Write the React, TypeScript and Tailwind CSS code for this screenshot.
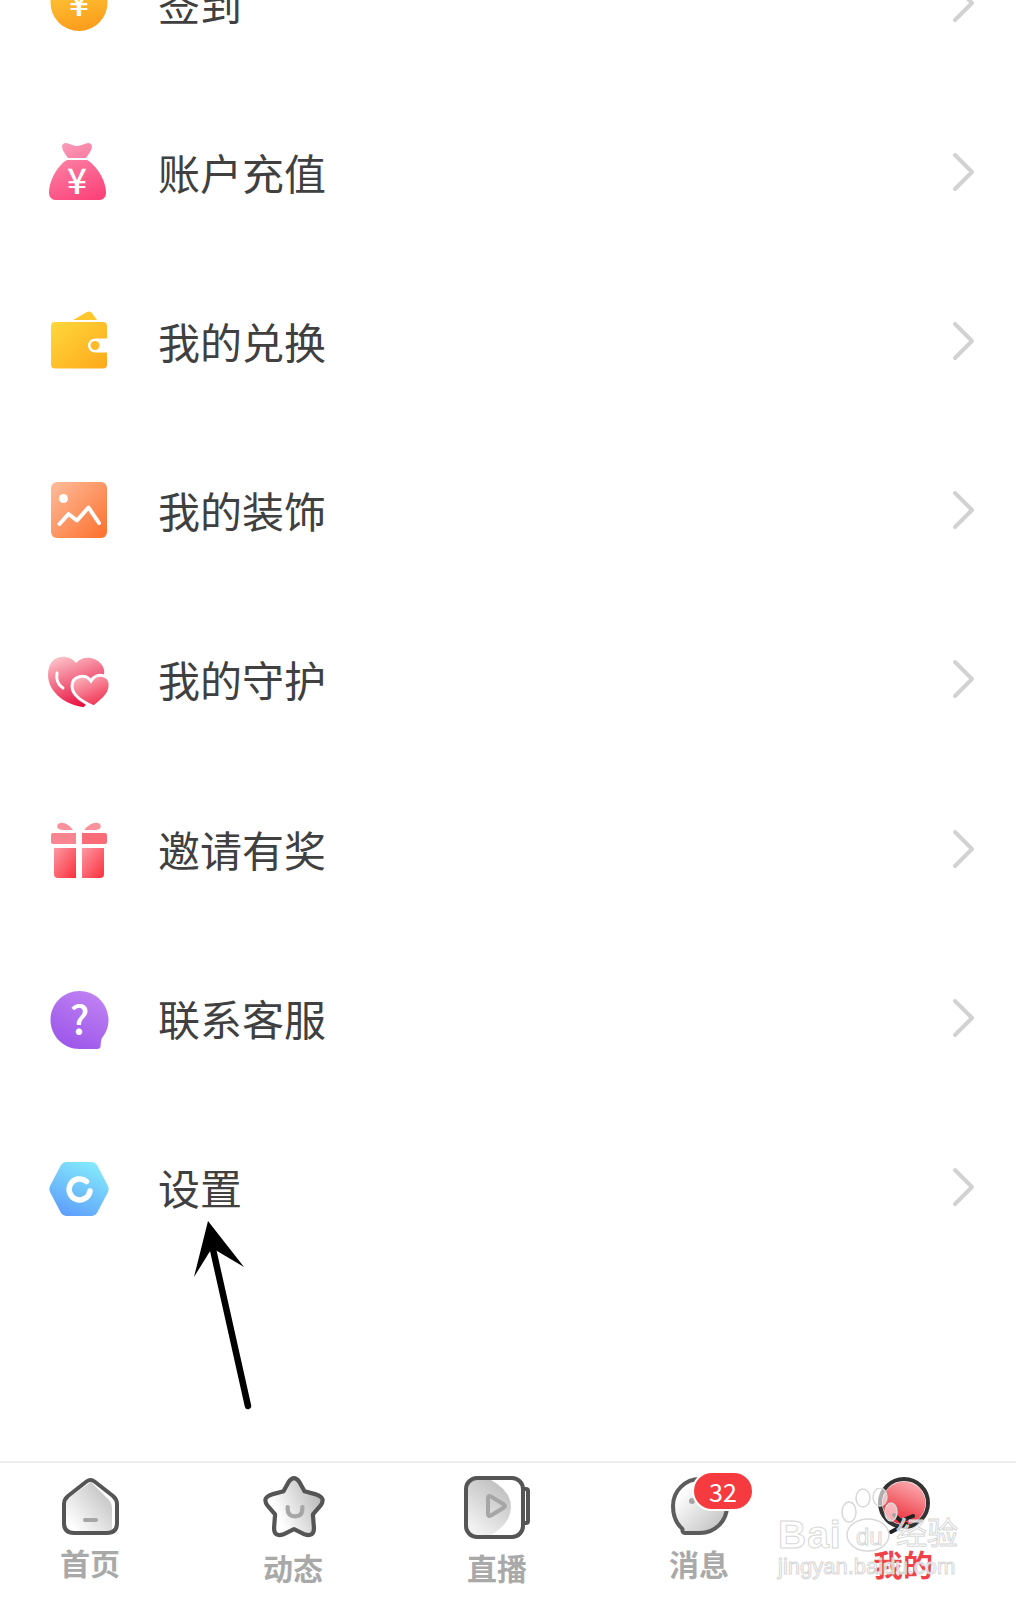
import type { ReactNode } from "react";

function Grad({ id, from, to, x1 = 0, y1 = 0, x2 = 1, y2 = 1 }: { id: string; from: string; to: string; x1?: number; y1?: number; x2?: number; y2?: number }) {
  return (
    <linearGradient id={id} x1={x1} y1={y1} x2={x2} y2={y2}>
      <stop offset="0" stopColor={from} />
      <stop offset="1" stopColor={to} />
    </linearGradient>
  );
}

function Icon80({ children }: { children: ReactNode }) {
  return (
    <svg width="80" height="80" viewBox="0 0 80 80" className="shrink-0 overflow-visible">
      {children}
    </svg>
  );
}

const CoinIcon = () => (
  <Icon80>
    <defs><Grad id="coin" from="#ffd23f" to="#fb9c1b" x1={0.3} y1={0} x2={0.5} y2={1} /></defs>
    <circle cx="39" cy="39.5" r="28.5" fill="url(#coin)" />
    <text x="39" y="53" textAnchor="middle" fontSize="35" fontWeight="500" fill="#fff">¥</text>
  </Icon80>
);

const BagIcon = () => (
  <Icon80>
    <defs>
      <Grad id="bag" from="#fb7ea2" to="#fc4279" x1={0.2} y1={0} x2={0.8} y2={1} />
      <Grad id="knot" from="#fa9ab8" to="#f97da3" />
    </defs>
    <path d="M23 12 C27 9 31 14 37 14 C43 14 47 9 51 12 C54 15 49 22 46 26 H28 C25 22 20 15 23 12 Z" fill="url(#knot)" />
    <path d="M27 28 H47 C56 33 66 48 66 61 C66 65 63 68 60 68 H15 C12 68 9 65 9 61 C9 48 18 33 27 28 Z" fill="url(#bag)" />
    <text x="37" y="62" textAnchor="middle" fontSize="35" fontWeight="500" fill="#fff">¥</text>
  </Icon80>
);

const WalletIcon = () => (
  <Icon80>
    <defs>
      <Grad id="wallet" from="#ffd83b" to="#fea81c" />
    </defs>
    <path d="M33 19 L47 11 Q50 9.5 52 12 L57 19 Z" fill="#ffc62e" />
    <path d="M15 21 H63 Q67 21 67 25 V37.5 H55 A7 7 0 0 0 55 51.5 H67 V63.5 Q67 67.5 63 67.5 H15 Q11 67.5 11 63.5 V25 Q11 21 15 21 Z" fill="url(#wallet)" />
    <circle cx="55" cy="44.5" r="4.5" fill="#fdbb2a" />
  </Icon80>
);

const PictureIcon = () => (
  <Icon80>
    <defs><Grad id="pic" from="#fdbd9c" to="#fd6f2c" /></defs>
    <rect x="11" y="12" width="56" height="56" rx="6" fill="url(#pic)" />
    <circle cx="23.5" cy="28.5" r="4.5" fill="#fff" />
    <polyline points="19.5,54 28.5,44 37,50.5 48.5,37.5 59,53" fill="none" stroke="#fff" strokeWidth="4" strokeLinecap="round" strokeLinejoin="round" />
  </Icon80>
);

const HeartsIcon = () => (
  <Icon80>
    <defs>
      <Grad id="h1" from="#fcc2c8" to="#e80c3e" x1={0.2} y1={0} x2={0.6} y2={1} />
      <Grad id="h2" from="#fbb6be" to="#ef2a4c" x1={0.2} y1={0} x2={0.7} y2={1} />
    </defs>
    <path d="M36 24 C28 14 8 15 8 36 C8 54 28 67 44 68 L62 41 C72 24 47 11 36 24 Z" fill="url(#h1)" />
    <path d="M17 34 C16 40 18 46 23 49" fill="none" stroke="#fff" strokeWidth="3" strokeLinecap="round" />
    <path d="M51 42 C57 32 71 36 70 47 C70 56 60 63 54 68 C46 64 32 58 32 47 C32 37 45 34 51 42 Z" fill="url(#h2)" stroke="#fff" strokeWidth="3" />
  </Icon80>
);

const GiftIcon = () => (
  <Icon80>
    <defs>
      <Grad id="gift" from="#fb9aa3" to="#fc2f3d" />
    </defs>
    <path d="M18 15 Q25 11 33 21 H22 Q15 20 18 15 Z" fill="#f8929d" />
    <path d="M60 15 Q53 11 44 21 H56 Q63 20 60 15 Z" fill="#f8929d" />
    <path d="M13 24 H36 V35 H13 Q11 35 11 33 V26 Q11 24 13 24 Z" fill="#f98590" />
    <path d="M42 24 H65 Q67 24 67 26 V33 Q67 35 65 35 H42 Z" fill="#fa6d78" />
    <path d="M14 39 H36 V69 H18 Q14 69 14 65 Z" fill="url(#gift)" />
    <path d="M42 39 H64 V65 Q64 69 60 69 H42 Z" fill="url(#gift)" />
  </Icon80>
);

const HelpIcon = () => (
  <Icon80>
    <defs><Grad id="help" from="#c083f2" to="#9c56ea" x1={0.8} y1={0} x2={0.3} y2={1} /></defs>
    <path d="M39.5 13 C55.5 13 68.5 26 68.5 42 C68.5 49 66 55 62 60 C61 62 61 64 60.5 69 Q60 71 57 71 H39.5 C23.5 71 10.5 58 10.5 42 C10.5 26 23.5 13 39.5 13 Z" fill="url(#help)" />
    <text x="39.5" y="56" textAnchor="middle" fontSize="40" fontWeight="500" fill="#fff">?</text>
  </Icon80>
);

const SettingsIcon = () => (
  <Icon80>
    <defs><Grad id="hex" from="#86edfb" to="#5e9ffb" x1={0.8} y1={0} x2={0.3} y2={1} /></defs>
    <path d="M26 15 H52 Q55 15 57 18 L68 39 Q69.5 42 68 45 L57 66 Q55 69 52 69 H26 Q23 69 21 66 L10 45 Q8.5 42 10 39 L21 18 Q23 15 26 15 Z" fill="url(#hex)" />
    <path d="M46.5 34.5 A10.5 10.5 0 1 0 50 44" fill="none" stroke="#fff" strokeWidth="5.5" strokeLinecap="round" />
  </Icon80>
);

const rows: { label: string; icon: ReactNode }[] = [
  { label: "签到", icon: <CoinIcon /> },
  { label: "账户充值", icon: <BagIcon /> },
  { label: "我的兑换", icon: <WalletIcon /> },
  { label: "我的装饰", icon: <PictureIcon /> },
  { label: "我的守护", icon: <HeartsIcon /> },
  { label: "邀请有奖", icon: <GiftIcon /> },
  { label: "联系客服", icon: <HelpIcon /> },
  { label: "设置", icon: <SettingsIcon /> },
];

function Chevron() {
  return (
    <svg width="24" height="40" viewBox="0 0 24 40">
      <polyline points="3,3 20,20 3,37" fill="none" stroke="#d2d2d2" strokeWidth="4" strokeLinecap="round" strokeLinejoin="round" />
    </svg>
  );
}

function Icon72({ children }: { children: ReactNode }) {
  return (
    <svg width="72" height="72" viewBox="0 0 72 72" className="overflow-visible">
      {children}
    </svg>
  );
}

const HomeTab = () => (
  <Icon72>
    <defs><Grad id="t1" from="#ffffff" to="#c4c4c4" x1={0.1} y1={0.9} x2={0.9} y2={0.2} /></defs>
    <path d="M37 11 L54 28 Q58 32 58 38 V60 H20 Q12 60 12 52 V33 Q12 29 16 26 Z" fill="url(#t1)" />
    <path d="M32.5 10.5 Q36.5 7.5 40.5 10.5 L59 25 Q63 28.5 63 33 V52 Q63 62 53 62 H20 Q10 62 10 52 V33 Q10 28.5 14 25 Z" fill="none" stroke="#555" strokeWidth="4" strokeLinejoin="round" />
    <line x1="31" y1="49" x2="42" y2="49" stroke="#a6a6a6" strokeWidth="4" strokeLinecap="round" />
  </Icon72>
);

const StarTab = () => (
  <Icon72>
    <defs><Grad id="t2" from="#ffffff" to="#bdbdbd" x1={0.2} y1={0.6} x2={0.9} y2={0.3} /></defs>
    <g transform="translate(37 36) scale(1.05) translate(-37 -36)">
      <path d="M32 12 Q37 5 42 12 L47 21 L58 24 Q68 27 62 35 L55 43 L56 56 Q56 65 47 62 L37 57 L27 62 Q18 65 18 56 L19 43 L12 35 Q6 27 16 24 L27 21 Z" fill="url(#t2)" stroke="#555" strokeWidth="4" strokeLinejoin="round" />
      <path d="M31 36 V38 Q31 45 38 45 Q45 45 45 38 V36" fill="none" stroke="#a6a6a6" strokeWidth="4" strokeLinecap="round" />
    </g>
  </Icon72>
);

const VideoTab = () => (
  <Icon72>
    <defs><Grad id="t3" from="#f4f4f4" to="#bcbcbc" x1={0.2} y1={1} x2={0.8} y2={0} /></defs>
    <path d="M7 9 H30 Q50 20 50 36 Q50 52 30 64 H7 Z" fill="url(#t3)" />
    <rect x="5" y="7" width="57" height="59" rx="11" fill="none" stroke="#555" strokeWidth="4" />
    <path d="M62 18 H65 Q67 18 67 20 V50 Q67 52 65 52 H62" fill="none" stroke="#555" strokeWidth="4" />
    <path d="M27 27 Q27 24 30 25.5 L43 33.5 Q45 35 43 36.5 L30 44.5 Q27 46 27 43 Z" fill="none" stroke="#a6a6a6" strokeWidth="4" strokeLinejoin="round" />
  </Icon72>
);

const MessageTab = () => (
  <Icon72>
    <defs><Grad id="t4" from="#ffffff" to="#c2c2c2" x1={0.2} y1={0.2} x2={0.9} y2={0.9} /></defs>
    <path d="M37 8 C52 8 64 20 64 35 C64 50 52 62 37 62 H22 Q19 62 19.5 58 C12.5 52 10 44 10 35 C10 20 22 8 37 8 Z" fill="url(#t4)" stroke="#5c5c5c" strokeWidth="4" strokeLinejoin="round" />
    <circle cx="29" cy="30" r="3" fill="#a6a6a6" />
  </Icon72>
);

const MineTab = () => (
  <Icon72>
    <defs><Grad id="t5" from="#fbb0b5" to="#ee3640" x1={0.8} y1={0} x2={0.4} y2={0.9} /></defs>
    <circle cx="37" cy="32" r="21.5" fill="url(#t5)" />
    <circle cx="37" cy="32" r="24" fill="none" stroke="#333" strokeWidth="4" />
    <path d="M27 44 L34 50 L46 45 M39 53 L24 61" fill="none" stroke="#222" strokeWidth="4" strokeLinecap="round" />
  </Icon72>
);

const tabs: { label: string; icon: ReactNode; labelClass: string }[] = [
  { label: "首页", icon: <HomeTab />, labelClass: "mt-[3px] text-[#a9a9a9]" },
  { label: "动态", icon: <StarTab />, labelClass: "mt-[8px] text-[#a9a9a9]" },
  { label: "直播", icon: <VideoTab />, labelClass: "mt-[8px] text-[#a9a9a9]" },
  { label: "消息", icon: <MessageTab />, labelClass: "mt-[4px] text-[#a9a9a9]" },
  { label: "我的", icon: <MineTab />, labelClass: "mt-[4px] text-[#ef4349]" },
];

function Watermark() {
  return (
    <div className="absolute left-[778px] top-[1488px] h-[96px] w-[190px] font-['Liberation_Sans','Noto_Sans_CJK_SC',sans-serif] text-white/70 [-webkit-text-stroke:1px_#d8d8d8]">
      <svg width="120" height="66" viewBox="0 0 120 66" className="absolute left-[50px] top-0">
        <g fill="rgba(255,255,255,0.6)" stroke="#d8d8d8" strokeWidth="1.5">
          <ellipse cx="21" cy="24" rx="7" ry="10" />
          <ellipse cx="35" cy="10" rx="7" ry="9" />
          <ellipse cx="52" cy="9" rx="7" ry="9" />
          <ellipse cx="63" cy="24" rx="6" ry="9" />
          <ellipse cx="40" cy="47" rx="21" ry="16" />
        </g>
      </svg>
      <span className="absolute left-0 top-[27px] text-[39px] font-bold leading-[40px] tracking-[1px]">Bai</span>
      <span className="absolute left-[78px] top-[37px] text-[24px] leading-[24px]">du</span>
      <span className="absolute left-[118px] top-[28px] text-[31px] leading-[36px]">经验</span>
      <span className="absolute left-0 top-[65px] text-[22px] leading-[28px]">jingyan.baidu.com</span>
    </div>
  );
}

function AnnotationArrow() {
  return (
    <svg width="80" height="200" viewBox="0 0 80 200" className="absolute left-[185px] top-[1215px]">
      <path d="M23 6 L9 62 L27 33 L59 52 Z" fill="#000" />
      <line x1="27" y1="30" x2="63" y2="191" stroke="#000" strokeWidth="6.5" strokeLinecap="round" />
    </svg>
  );
}

export default function App() {
  return (
    <div className="relative flex h-[1600px] w-[1016px] flex-col overflow-hidden bg-white font-['Noto_Sans_CJK_SC','Noto_Sans',sans-serif]">
      <div className="-mt-[82px] flex-1">
        {rows.map((r) => (
          <div key={r.label} className="flex h-[169.2px] items-center pl-[40px] pr-[40px]">
            {r.icon}
            <span className="ml-[38px] text-[42px] leading-[56px] text-[#404040]">{r.label}</span>
            <div className="ml-auto flex">
              <Chevron />
            </div>
          </div>
        ))}
      </div>

      <div className="grid h-[139px] shrink-0 grid-cols-[180px_226px_182px_222px_186px] border-t-2 border-[#ececec] pt-[8px]">
        {tabs.map((t) => (
          <div key={t.label} className="relative flex flex-col items-center">
            {t.icon}
            {t.label === "消息" && (
              <span className="absolute left-[104px] top-0 flex h-[40px] w-[62px] items-center justify-center rounded-full border-2 border-white bg-[#f63b40] text-[25px] leading-none text-white">
                32
              </span>
            )}
            <span className={`text-[30px] font-bold leading-[32px] ${t.labelClass}`}>{t.label}</span>
          </div>
        ))}
      </div>

      <AnnotationArrow />
      <Watermark />
    </div>
  );
}
